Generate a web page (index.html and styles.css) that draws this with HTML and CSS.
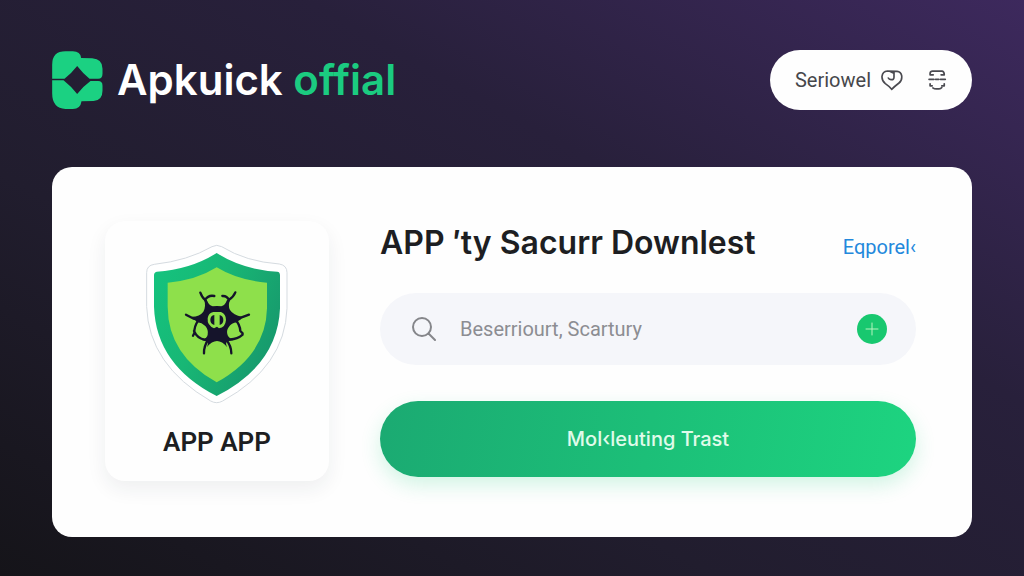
FILE: index.html
```html
<!DOCTYPE html>
<html lang="en">
<head>
<meta charset="utf-8">
<meta name="viewport" content="width=device-width, initial-scale=1">
<title>Apkuick offial</title>
<link rel="stylesheet" href="styles.css">
</head>
<body>
<div class="page">
  <header class="header">
    <a class="brand" href="#">
      <svg class="brand-mark" viewBox="36 33 152 174" aria-hidden="true">
        <path fill="#1bd182" d="M36 116V74Q36 34 76 34H98Q121 34 123 54L156 55Q187 57 187 86V101Q187 116 174 116H148Q128 100 111 78Q94 100 73 116Z"/>
        <path fill="#1bd182" d="M36 121H70Q94 140 111 162Q130 138 151 123H174Q187 123 187 137V152Q187 181 160 183L124 184Q121 207 98 207H76Q36 205 36 160Z"/>
      </svg>
      <span class="brand-name">Apkuick <span class="brand-accent">offial</span></span>
    </a>
    <nav class="actions" aria-label="Account">
      <a class="action-link" href="#">Seriowel</a>
      <button class="icon-button" type="button" aria-label="Favourite">
        <svg class="action-icon heart" viewBox="364 92 66 62" aria-hidden="true">
          <path d="M396 151Q389 142 377 134Q366 125 367 112Q369 97 383 96L412 97Q424 98 426 110Q428 124 418 132Q405 142 396 151ZM403 98V115Q403 123 394 122Q388 121 386 117M401 102L390 97"/>
        </svg>
      </button>
      <button class="icon-button" type="button" aria-label="Scan">
        <svg class="action-icon scan" viewBox="500 90 58 62" aria-hidden="true">
          <path d="M509 106V101Q510 95 516 95H544Q550 96 550 106M509 106H518M541 106H550M506 119H520M525 119H534M539 119H553M509 132V138H515M550 132V138H543M517 144Q521 147 527 147H535Q540 147 543 143"/>
        </svg>
      </button>
    </nav>
  </header>

  <main class="panel">
    <section class="app-card">
      <svg class="shield" viewBox="20 12 426 480" role="img" aria-label="Shield with bug">
        <defs>
          <linearGradient id="rim" x1="0" y1="0" x2="1" y2="0.5">
            <stop offset="0" stop-color="#14c47f"/>
            <stop offset="0.5" stop-color="#18b775"/>
            <stop offset="1" stop-color="#179b6d"/>
          </linearGradient>
        </defs>
        <path fill="#fff" stroke="#d5dbe0" stroke-width="3" d="M218 20Q232 12 247 20Q320 65 420 72Q443 76 443 98V205Q437 380 250 483Q232 493 214 483Q28 375 22 200V98Q22 76 45 73Q145 62 218 20Z"/>
        <path fill="url(#rim)" d="M232 39Q310 89 414 95Q422 96 422 106V205Q415 375 232 468Q50 375 44 200V106Q44 97 52 95Q155 88 232 39Z"/>
        <path fill="#8ee04b" d="M232 82Q296 121 383 128V205Q380 345 232 427Q86 345 85 200V128Q170 121 232 82Z"/>
        <g fill="none" stroke="#15142b" stroke-width="7" stroke-linecap="round" stroke-linejoin="round">
          <path d="M183 158Q189 174 197 179Q205 190 204 209M197 180Q207 164 225 168"/>
          <path d="M288 157Q283 170 269 179Q262 190 262 209M269 180Q263 167 249 168"/>
          <path d="M140 224L159 234Q177 244 190 226M329 224L307 232Q290 243 276 226"/>
          <path d="M177 241Q164 259 165 279L161 287M164 273Q174 296 197 299Q210 298 217 288"/>
          <path d="M288 239Q302 254 303 273L310 280M310 284Q293 299 270 298Q255 296 248 286"/>
          <path d="M208 296Q193 319 194 340M259 297Q276 317 276 340"/>
        </g>
        <path fill="#15142b" d="M194 178L202 180Q208 196 220 199Q233 197 246 199Q258 196 263 180L272 178Q265 198 272 210Q282 226 308 230L306 237Q296 243 293 247Q276 249 268 262Q260 272 265 286Q268 294 282 301L265 304Q256 309 264 322Q248 303 233 303Q218 303 202 322Q210 309 200 304L188 301Q204 294 205 284Q208 270 198 258Q188 248 172 246Q170 240 158 237V230Q181 230 192 215Q201 200 194 178Z"/>
        <path fill="#8ee04b" d="M222 216H245Q260 222 260 240Q258 263 239 265L233 260L224 265Q203 256 205 235Q207 219 222 216Z"/>
        <path fill="#15142b" d="M225 225V255Q213 252 213 240Q213 227 225 225ZM241 225V255Q252 252 252 240Q252 228 241 225Z"/>
      </svg>
      <h2 class="app-name">APP APP</h2>
    </section>

    <section class="content">
      <div class="title-row">
        <h1 class="title">APP ′ty Sacurr Downlest</h1>
        <a class="more-link" href="#">Eqporel‹</a>
      </div>
      <form class="form">
        <div class="search">
          <svg class="search-icon" viewBox="0 0 24 24" aria-hidden="true">
            <circle cx="10" cy="10" r="9"/>
            <path d="M16.500 16.500L23 23"/>
          </svg>
          <input class="search-input" type="text" aria-label="Search apps" placeholder="Beserriourt, Scartury">
          <button class="add-button" type="button" aria-label="Add">
            <svg class="add-icon" viewBox="0 0 14 14" aria-hidden="true"><path d="M7 1V13M1 7H13"/></svg>
          </button>
        </div>
        <button class="submit" type="submit">Mol‹leuting Trast</button>
      </form>
    </section>
  </main>
</div>
</body>
</html>
```
FILE: styles.css
```css
* {
  box-sizing: border-box;
}

body {
  margin: 0;
  font-family: Inter, "Liberation Sans", sans-serif;
  color: #1d1e22;
}

.page {
  min-height: 100vh;
  padding: 50px 52px 39px;
  background: linear-gradient(to top right, #151419 0%, #211d2e 35%, #28203b 65%, #3d295d 100%);
}

.header {
  display: flex;
  align-items: center;
  justify-content: space-between;
  margin-bottom: 57px;
}

.brand {
  display: flex;
  align-items: center;
  gap: 14px;
  color: #fff;
  text-decoration: none;
}

.brand-mark {
  width: 51px;
  height: 58px;
}

.brand-name {
  font-size: 42px;
  font-weight: 600;
  line-height: 48px;
}

.brand-accent {
  color: #1bcb80;
}

.actions {
  display: flex;
  align-items: center;
  height: 60px;
  padding: 0 25px;
  border-radius: 30px;
  background: #fefefe;
}

.action-link {
  margin-right: 10px;
  font-family: Roboto, sans-serif;
  font-size: 20px;
  line-height: 24px;
  color: #46474b;
  text-decoration: none;
}

.icon-button {
  display: flex;
  padding: 0;
  border: 0;
  background: none;
}

.icon-button + .icon-button {
  margin-left: 24px;
}

.action-icon {
  fill: none;
  stroke: #4a4a50;
  stroke-width: 5;
  stroke-linecap: round;
  stroke-linejoin: round;
}

.heart {
  width: 22px;
  height: 22px;
}

.scan {
  width: 20px;
  height: 22px;
}

.panel {
  display: flex;
  gap: 51px;
  padding: 54px 56px 56px 53px;
  border-radius: 20px;
  background: #fefefe;
}

.app-card {
  display: flex;
  flex: 0 0 224px;
  flex-direction: column;
  align-items: center;
  padding: 23px 20px;
  border-radius: 20px;
  background: #fefefe;
  box-shadow: 0 8px 20px rgba(30, 40, 60, 0.07);
}

.shield {
  width: 142px;
  height: 160px;
}

.app-name {
  margin: 22px 0 0;
  font-family: Roboto, sans-serif;
  font-size: 26px;
  font-weight: 600;
  line-height: 32px;
}

.content {
  flex: 1;
  min-width: 0;
}

.title-row {
  display: flex;
  align-items: baseline;
  justify-content: space-between;
  margin-bottom: 28px;
}

.title {
  margin: 0;
  font-size: 32px;
  font-weight: 600;
  line-height: 44px;
}

.more-link {
  font-family: Roboto, sans-serif;
  font-size: 20px;
  line-height: 24px;
  color: #2388dc;
  text-decoration: none;
}

.form {
  display: flex;
  flex-direction: column;
  gap: 36px;
}

.search {
  display: flex;
  align-items: center;
  height: 72px;
  padding: 0 29px 0 32px;
  border-radius: 36px;
  background: #f5f6fa;
}

.search-icon {
  flex: none;
  width: 24px;
  height: 24px;
  margin-right: 24px;
  fill: none;
  stroke: #85868a;
  stroke-width: 2;
  stroke-linecap: round;
}

.search-input {
  flex: 1;
  min-width: 0;
  padding: 0;
  border: 0;
  outline: 0;
  background: none;
  font-family: Roboto, sans-serif;
  font-size: 20px;
  line-height: 28px;
  color: #46474b;
}

.search-input::placeholder {
  color: #8c8d92;
  opacity: 1;
}

.add-button {
  display: flex;
  flex: none;
  align-items: center;
  justify-content: center;
  width: 30px;
  height: 30px;
  padding: 0;
  border: 0;
  border-radius: 50%;
  background: #18c86f;
}

.add-icon {
  width: 14px;
  height: 14px;
  fill: none;
  stroke: #b6f4c0;
  stroke-width: 1;
  stroke-linecap: round;
}

.submit {
  height: 76px;
  border: 0;
  border-radius: 38px;
  background: linear-gradient(100deg, #1baa72, #1cbf78 50%, #1dd480);
  box-shadow: 0 8px 20px rgba(29, 205, 124, 0.2);
  font-family: inherit;
  font-size: 20px;
  font-weight: 500;
  line-height: 28px;
  color: #e0fbea;
}
```
